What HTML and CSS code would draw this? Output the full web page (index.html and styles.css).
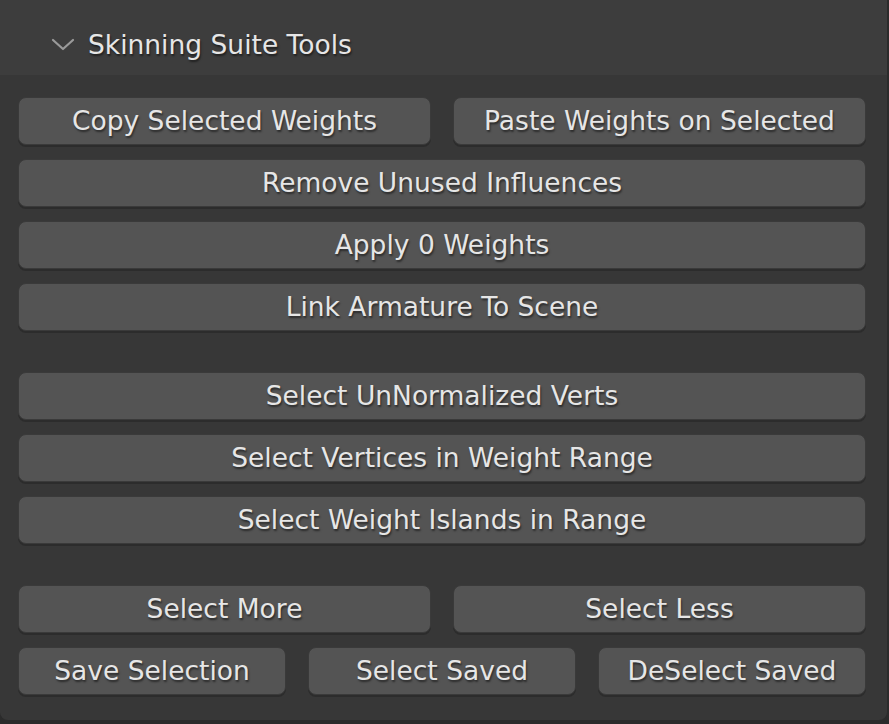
FILE: index.html
```html
<!DOCTYPE html>
<html>
<head>
<meta charset="utf-8">
<link rel="stylesheet" href="styles.css">
</head>
<body>
<div class="panel">
  <div class="header">
    <svg class="chevron" width="24" height="14" viewBox="0 0 24 14"><path d="M2 2 L12 11 L22 2" fill="none" stroke="#9a9a9a" stroke-width="2.2" stroke-linecap="round" stroke-linejoin="round"/></svg>
    <span class="title">Skinning Suite Tools</span>
  </div>
  <div class="content">
    <div class="section">
      <div class="row cols2"><div class="btn">Copy Selected Weights</div><div class="btn">Paste Weights on Selected</div></div>
      <div class="row"><div class="btn">Remove Unused Influences</div></div>
      <div class="row"><div class="btn">Apply 0 Weights</div></div>
      <div class="row"><div class="btn">Link Armature To Scene</div></div>
    </div>
    <div class="section">
      <div class="row"><div class="btn">Select UnNormalized Verts</div></div>
      <div class="row"><div class="btn">Select Vertices in Weight Range</div></div>
      <div class="row"><div class="btn">Select Weight Islands in Range</div></div>
    </div>
    <div class="section">
      <div class="row cols2"><div class="btn">Select More</div><div class="btn">Select Less</div></div>
      <div class="row cols3"><div class="btn">Save Selection</div><div class="btn">Select Saved</div><div class="btn">DeSelect Saved</div></div>
    </div>
  </div>
</div>
</body>
</html>
```

FILE: styles.css
```css
html, body {
  margin: 0;
  padding: 0;
  background: #2b2b2b;
  width: 889px;
  height: 724px;
  overflow: hidden;
}
.panel {
  width: 887px;
  height: 720px;
  background: #373737;
  border-radius: 0 0 8px 8px;
  font-family: "DejaVu Sans", sans-serif;
  color: #e6e6e6;
  text-shadow: 1px 2px 2px rgba(0, 0, 0, 0.5);
}
.header {
  height: 75px;
  background: #3d3d3d;
  display: flex;
  align-items: center;
  padding-left: 51px;
  padding-top: 16px;
  box-sizing: border-box;
}
.chevron {
  margin-right: 13px;
  margin-top: -1px;
}
.title {
  font-size: 26.5px;
  margin-top: -2px;
}
.content {
  padding: 22px 21px 0 18px;
  display: flex;
  flex-direction: column;
  gap: 41px;
}
.section {
  display: flex;
  flex-direction: column;
  gap: 14px;
}
.row {
  display: grid;
  grid-template-columns: 1fr;
  gap: 22px;
}
.row.cols2 { grid-template-columns: 1fr 1fr; }
.row.cols3 { grid-template-columns: 1fr 1fr 1fr; }
.btn {
  height: 48px;
  box-sizing: border-box;
  background: #545454;
  border: 1px solid #3a3a3a;
  border-radius: 8px;
  box-shadow: 0 2px 0 #2c2c2c;
  display: flex;
  align-items: center;
  justify-content: center;
  font-size: 26.5px;
  padding-bottom: 1px;
  white-space: nowrap;
}
```
